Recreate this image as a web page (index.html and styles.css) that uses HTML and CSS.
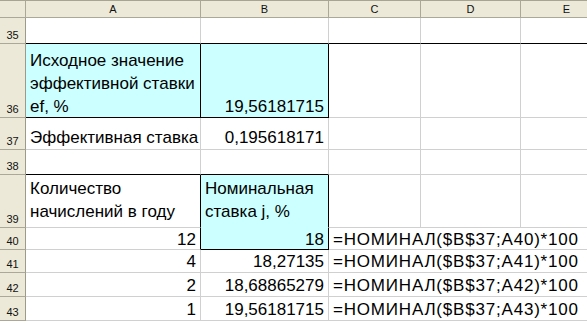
FILE: index.html
```html
<!DOCTYPE html>
<html lang="ru">

<head>
    <meta charset="UTF-8">
    <title>Номинальная ставка</title>
    <link rel="stylesheet" href="styles.css">
</head>

<body>
    <table class="sheet">
        <colgroup>
            <col class="c-rh">
            <col class="c-a">
            <col class="c-b">
            <col class="c-c">
            <col class="c-d">
            <col class="c-e">
        </colgroup>
        <tr class="r-head">
            <th class="corner"></th>
            <th>A</th>
            <th>B</th>
            <th>C</th>
            <th>D</th>
            <th>E</th>
        </tr>
        <tr class="r35">
            <th class="rh">35</th>
            <td class="dk-b"></td>
            <td class="dk-b"></td>
            <td class="dk-b"></td>
            <td class="dk-b"></td>
            <td class="dk-b"></td>
        </tr>
        <tr class="r36">
            <th class="rh">36</th>
            <td class="fill lines dk-r dk-b">
                <div>Исходное значение</div>
                <div>эффективной ставки</div>
                <div>ef, %</div>
            </td>
            <td class="fill num dk-r dk-b">19,56181715</td>
            <td></td>
            <td></td>
            <td></td>
        </tr>
        <tr class="r37">
            <th class="rh">37</th>
            <td>Эффективная ставка</td>
            <td class="num">0,195618171</td>
            <td></td>
            <td></td>
            <td></td>
        </tr>
        <tr class="r38">
            <th class="rh">38</th>
            <td class="dk-b"></td>
            <td class="dk-b"></td>
            <td></td>
            <td></td>
            <td></td>
        </tr>
        <tr class="r39">
            <th class="rh">39</th>
            <td class="lines dk-r">
                <div>Количество</div>
                <div>начислений в году</div>
            </td>
            <td class="fill lines dk-r no-b">
                <div>Номинальная</div>
                <div>ставка j, %</div>
            </td>
            <td></td>
            <td></td>
            <td></td>
        </tr>
        <tr class="r40">
            <th class="rh">40</th>
            <td class="num dk-r">12</td>
            <td class="fill num dk-r dk-b">18</td>
            <td class="formula" colspan="3">=НОМИНАЛ($B$37;A40)*100</td>
        </tr>
        <tr class="r41">
            <th class="rh">41</th>
            <td class="num">4</td>
            <td class="num">18,27135</td>
            <td class="formula" colspan="3">=НОМИНАЛ($B$37;A41)*100</td>
        </tr>
        <tr class="r42">
            <th class="rh">42</th>
            <td class="num">2</td>
            <td class="num">18,68865279</td>
            <td class="formula" colspan="3">=НОМИНАЛ($B$37;A42)*100</td>
        </tr>
        <tr class="r43">
            <th class="rh">43</th>
            <td class="num">1</td>
            <td class="num">19,56181715</td>
            <td class="formula" colspan="3">=НОМИНАЛ($B$37;A43)*100</td>
        </tr>
    </table>
</body>

</html>
```

FILE: styles.css
```css
* {
    padding: 0;
    margin: 0;
    box-sizing: border-box;
}

body {
    width: 587px;
    height: 324px;
    overflow: hidden;
    background-color: #fff;
    font-family: "Liberation Sans", Arial, sans-serif;
}

.sheet {
    table-layout: fixed;
    width: 613px;
    border-collapse: separate;
    border-spacing: 0;
    color: #000;
}

.c-rh { width: 26px; }
.c-a { width: 175px; }
.c-b { width: 128px; }
.c-c { width: 92px; }
.c-d { width: 100px; }
.c-e { width: 92px; }

/* column letters and row numbers */
th {
    background-color: #ece9d8;
    font-size: 11px;
    line-height: 14px;
    font-weight: normal;
    color: #111;
    border-right: 1px solid #aca899;
    border-bottom: 1px solid #aca899;
    text-align: center;
}

.r-head th {
    height: 18px;
    border-top: 1px solid #a7a493;
    vertical-align: middle;
}

.rh {
    vertical-align: bottom;
    padding-bottom: 1px;
    border-right-color: #9d9a8a;
}

/* cells: text sits on the bottom edge */
td {
    font-size: 17px;
    line-height: 18px;
    border-right: 1px solid #d0d0d0;
    border-bottom: 1px solid #d0d0d0;
    padding: 0 4px 1px 4px;
    vertical-align: bottom;
    white-space: nowrap;
    overflow: visible;
}

.r35 { height: 26px; }
.r36 { height: 74px; }
.r37 { height: 32px; }
.r38 { height: 25px; }
.r39 { height: 53px; }
.r40 { height: 22px; }
.r41 { height: 23px; }
.r42 { height: 24px; }
.r43 { height: 24px; }

.r37 td {
    padding-bottom: 2px;
}

.r39 td {
    padding-bottom: 6px;
}

.r40 td {
    padding-bottom: 0;
}

.lines div + div {
    margin-top: 5px;
}

.fill {
    background-color: #ccffff;
}

.num {
    text-align: right;
}

.formula {
    border-right: none;
    letter-spacing: 0.8px;
}

.dk-r {
    border-right-color: #000;
}

.dk-b {
    border-bottom-color: #000;
}

.no-b {
    border-bottom-color: #ccffff;
}
```
